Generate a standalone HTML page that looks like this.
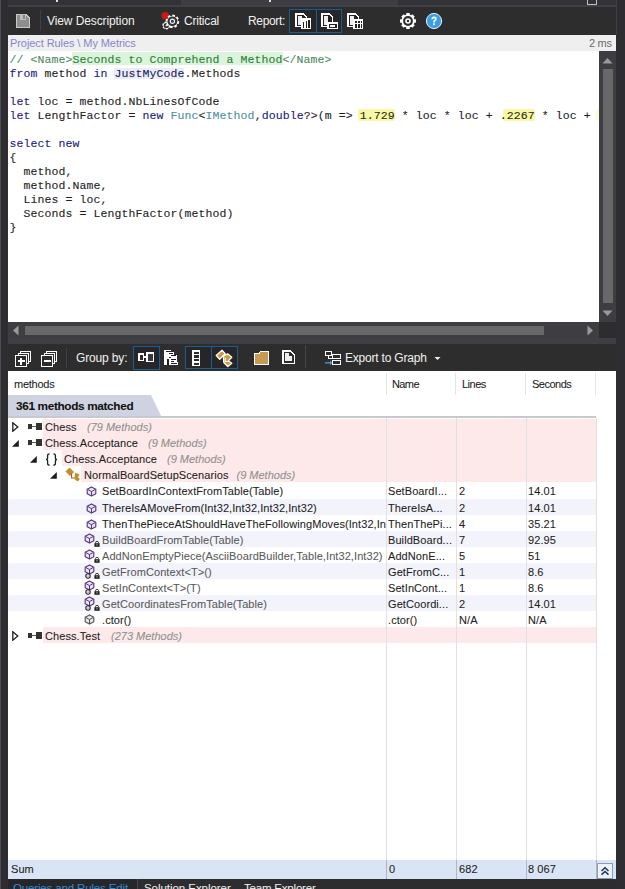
<!DOCTYPE html>
<html><head><meta charset="utf-8">
<style>
*{box-sizing:border-box}
html,body{margin:0;padding:0}
body{width:625px;height:889px;overflow:hidden;position:relative;background:#2d2d30;font-family:"Liberation Sans",sans-serif;}
.a{position:absolute}
.t{position:absolute;white-space:nowrap;line-height:1}
.code{position:absolute;left:9.5px;font-family:"Liberation Mono",monospace;font-size:11.5px;letter-spacing:0.1px;line-height:14px;-webkit-text-stroke:0.1px;white-space:pre;color:#1e1e1e}
.kw{color:#1a1a85}
.ty{color:#4f8ea6}
.cm{color:#4f8a5e}
.cmt{color:#2a8236}
.hl{color:#2a2a10}
.jm{color:#22225a}
.row{position:absolute;left:8px;width:588px;height:16px}
.cell{position:absolute;font-size:11px;line-height:16px;margin-top:1px;letter-spacing:0.08px;-webkit-text-stroke:0.08px currentColor;white-space:nowrap;color:#1e1e1e}
.it{font-style:italic;color:#888}
</style></head><body>
<!-- top band -->
<div class="a" style="left:0;top:0;width:625px;height:5px;background:#333337"></div>
<div class="a" style="left:181px;top:0;width:217px;height:5px;background:#3d3d43"></div>
<div class="a" style="left:0;top:5px;width:625px;height:2px;background:#404046"></div>
<div class="a" style="left:56px;top:0;width:1.5px;height:2px;background:#e0e0e0"></div>
<div class="a" style="left:269px;top:0;width:1.5px;height:2px;background:#e0e0e0"></div>
<div class="a" style="left:587px;top:-2px;width:10px;height:6.5px;border:1.5px solid #c0c0c0"></div>
<!-- left strip -->
<div class="a" style="left:0;top:0;width:8px;height:889px;background:#2d2d32"></div><div class="a" style="left:0;top:0;width:1px;height:889px;background:#4c4c52"></div>
<!-- right strip -->
<div class="a" style="left:616px;top:0;width:9px;height:889px;background:#2e2e32"></div><div class="a" style="left:616px;top:0;width:1px;height:35px;background:#404046"></div>
<!-- toolbar 1 -->
<div class="a" style="left:8px;top:7px;width:608px;height:28px;background:#2d2d2d"></div>


<!-- floppy -->
<svg class="a" style="left:15px;top:13px" width="16" height="16" viewBox="0 0 16 16" shape-rendering="crispEdges">
<path d="M1 1H11L15 5V15H1Z" fill="#c9c9c9"/>
<path d="M2 2H10.5L14 5.5V14H2Z" fill="#8e8e8e"/>
<rect x="5" y="1" width="6" height="6" fill="#bdbdbd"/>
<rect x="8" y="2" width="2" height="4" fill="#858585"/>
</svg>
<div class="a" style="left:40px;top:10px;width:1px;height:21px;background:#3f3f46"></div>
<div class="t" style="left:47px;top:15px;font-size:12px;letter-spacing:-0.1px;color:#f1f1f1">View Description</div>
<!-- critical gear -->
<svg class="a" style="left:158px;top:8px" width="26" height="24" viewBox="0 0 26 24">
<circle cx="7.3" cy="7.8" r="3.8" fill="#c81818"/>
<path d="M11.49 17.31 L12.40 17.55 L11.71 19.77 L10.83 19.46 L10.06 20.17 L10.31 21.08 L8.04 21.59 L7.86 20.67 L6.87 20.36 L6.21 21.03 L4.62 19.32 L5.34 18.71 L5.11 17.69 L4.20 17.45 L4.89 15.23 L5.77 15.54 L6.54 14.83 L6.29 13.92 L8.56 13.41 L8.74 14.33 L9.73 14.64 L10.39 13.97 L11.98 15.68 L11.26 16.29Z" fill="#fff"/>
<circle cx="8.3" cy="17.5" r="2.6" fill="#2d2d2d"/>
<circle cx="8.3" cy="17.5" r="0.9" fill="#ccc"/>
<path d="M19.79 13.05 L21.30 13.33 L20.77 15.96 L19.27 15.63 L18.39 16.94 L19.26 18.20 L17.02 19.68 L16.20 18.39 L14.65 18.69 L14.37 20.20 L11.74 19.67 L12.07 18.17 L10.76 17.29 L9.50 18.16 L8.02 15.92 L9.31 15.10 L9.01 13.55 L7.50 13.27 L8.03 10.64 L9.53 10.97 L10.41 9.66 L9.54 8.40 L11.78 6.92 L12.60 8.21 L14.15 7.91 L14.43 6.40 L17.06 6.93 L16.73 8.43 L18.04 9.31 L19.30 8.44 L20.78 10.68 L19.49 11.50Z" fill="#fff"/>
<circle cx="14.4" cy="13.3" r="4.9" fill="#333"/>
<circle cx="14.4" cy="13.3" r="2.1" fill="none" stroke="#eee" stroke-width="1.2"/>
<circle cx="14.4" cy="13.3" r="0.7" fill="#555"/>
</svg>
<div class="t" style="left:184px;top:15px;font-size:12px;letter-spacing:-0.2px;color:#f1f1f1">Critical</div>
<div class="t" style="left:248px;top:15px;font-size:12px;letter-spacing:-0.35px;color:#f1f1f1">Report:</div>
<!-- report buttons -->
<div class="a" style="left:289px;top:9px;width:28px;height:24px;border:1px solid #1b5d91;background:#262628"></div>
<div class="a" style="left:316px;top:9px;width:26px;height:24px;border:1px solid #1b5d91;background:#262628"></div>
<svg class="a" style="left:293px;top:11px" width="20" height="20" viewBox="0 0 20 20" shape-rendering="crispEdges">
<path d="M2 2H10L14 6V16H2Z" fill="#fff"/>
<path d="M3.5 3.5H9.5L12.5 6.5V14.5H3.5Z" fill="#222"/>
<rect x="5" y="5" width="4" height="9" fill="#eee"/>
<rect x="8" y="7" width="10" height="11" fill="#fff"/>
<rect x="9.5" y="11" width="1.6" height="5.5" fill="#222"/>
<rect x="12.5" y="9.5" width="1.6" height="7" fill="#222"/>
<rect x="15.3" y="9" width="1.6" height="7.5" fill="#222"/>
</svg>
<svg class="a" style="left:319px;top:11px" width="20" height="20" viewBox="0 0 20 20" shape-rendering="crispEdges">
<path d="M2 2H10L14 6V16H2Z" fill="#fff"/>
<path d="M3.5 3.5H9.5L12.5 6.5V14.5H3.5Z" fill="#222"/>
<rect x="5" y="5" width="4" height="9" fill="#eee"/>
<rect x="8" y="11" width="11" height="7" fill="#fff"/>
<rect x="9.5" y="12.5" width="8" height="4" fill="#222"/>
<rect x="11" y="13.5" width="5" height="2" fill="#fff"/>
</svg>
<svg class="a" style="left:345px;top:11px" width="20" height="20" viewBox="0 0 20 20" shape-rendering="crispEdges">
<path d="M2 2H10L14 6V16H2Z" fill="#fff"/>
<path d="M3.5 3.5H9.5L12.5 6.5V14.5H3.5Z" fill="#222"/>
<rect x="5" y="5" width="4" height="9" fill="#eee"/>
<rect x="8" y="8" width="10" height="10" fill="#fff"/>
<rect x="9.5" y="9.5" width="2" height="2" fill="#222"/><rect x="12.5" y="9.5" width="2" height="2" fill="#222"/><rect x="15.5" y="9.5" width="1.5" height="2" fill="#222"/>
<rect x="9.5" y="12.5" width="2" height="2" fill="#222"/><rect x="12.5" y="12.5" width="2" height="2" fill="#222"/><rect x="15.5" y="12.5" width="1.5" height="2" fill="#222"/>
<rect x="9.5" y="15.3" width="2" height="1.7" fill="#222"/><rect x="12.5" y="15.3" width="2" height="1.7" fill="#222"/><rect x="15.5" y="15.3" width="1.5" height="1.7" fill="#222"/>
</svg>
<!-- settings gear -->
<svg class="a" style="left:399px;top:12px" width="18" height="18" viewBox="0 0 18 18">
<path d="M15.36 7.24 L16.91 7.26 L16.91 10.74 L15.36 10.76 L14.74 12.25 L15.82 13.37 L13.37 15.82 L12.25 14.74 L10.76 15.36 L10.74 16.91 L7.26 16.91 L7.24 15.36 L5.75 14.74 L4.63 15.82 L2.18 13.37 L3.26 12.25 L2.64 10.76 L1.09 10.74 L1.09 7.26 L2.64 7.24 L3.26 5.75 L2.18 4.63 L4.63 2.18 L5.75 3.26 L7.24 2.64 L7.26 1.09 L10.74 1.09 L10.76 2.64 L12.25 3.26 L13.37 2.18 L15.82 4.63 L14.74 5.75Z" fill="#fff"/>
<circle cx="9" cy="9" r="4.9" fill="#2d2d2d"/>
<circle cx="9" cy="9" r="2.8" fill="#fff"/>
<circle cx="9" cy="9" r="1.2" fill="#2d2d2d"/>
</svg>
<!-- help -->
<svg class="a" style="left:425px;top:12px" width="18" height="18" viewBox="0 0 18 18">
<circle cx="9" cy="9" r="7.6" fill="#3a9ee2" stroke="#e8f4fc" stroke-width="1"/>
<path d="M6.4 7.2Q6.4 4.6 9 4.6Q11.7 4.6 11.7 7Q11.7 8.3 10.4 9Q9.8 9.4 9.8 10.4H8.2Q8.2 8.8 9.3 8.1Q10 7.7 10 7Q10 6.2 9 6.2Q8.1 6.2 8.1 7.2Z" fill="#fff"/><rect x="8.1" y="11.3" width="1.8" height="1.8" fill="#fff"/>
</svg>

<!-- project bar -->
<div class="a" style="left:8px;top:35px;width:608px;height:16px;background:#efeff0"></div><div class="a" style="left:8px;top:50.5px;width:608px;height:1px;background:#e2e2e4"></div>
<div class="t" style="left:10px;top:38px;font-size:11px;letter-spacing:-0.08px;color:#8686cc">Project Rules \ My Metrics</div>
<div class="t" style="left:589px;top:38px;font-size:11px;letter-spacing:-0.3px;color:#6a6a6a">2 ms</div>

<!-- code area -->
<div class="a" style="left:8px;top:51px;width:591px;height:271px;background:#fff"></div>
<div class="a" style="left:72px;top:51.5px;width:211px;height:13.5px;background:#dcf4dc"></div>
<div class="a" style="left:114px;top:68px;width:70px;height:11px;background:#ececf9"></div>
<div class="a" style="left:358px;top:108.5px;width:37px;height:12px;background:#f8f8a6;border-radius:2px"></div>
<div class="a" style="left:503px;top:108.5px;width:32px;height:12px;background:#f8f8a6;border-radius:2px"></div>
<div class="a" style="left:596px;top:109px;width:3px;height:11px;background:#fbfbd8"></div>
<div class="code" style="top:52.5px"><span class="cm">// &lt;Name&gt;</span><span class="cmt">Seconds to Comprehend a Method</span><span class="cm">&lt;/Name&gt;</span>
<span class="kw">from</span> method <span class="kw">in</span> <span class="jm">JustMyCode</span>.Methods

<span class="kw">let</span> loc = method.NbLinesOfCode
<span class="kw">let</span> LengthFactor = <span class="kw">new</span> <span class="ty">Func</span>&lt;<span class="ty">IMethod</span>,<span class="kw">double</span>?&gt;(m =&gt; <span class="hl">1.729</span> * loc * loc + .<span class="hl">2267</span> * loc + 

<span class="kw">select</span> <span class="kw">new</span>
{
  method,
  method.Name,
  Lines = loc,
  Seconds = LengthFactor(method)
}</div>
<!-- vscroll -->
<div class="a" style="left:599px;top:51px;width:17px;height:271px;background:#3e3e42"></div>
<svg class="a" style="left:602px;top:57px" width="11" height="7" viewBox="0 0 11 7"><path d="M0.5 6.5H10.5L5.5 1Z" fill="#9a9a9a"/></svg>
<div class="a" style="left:603px;top:69px;width:9.5px;height:234px;background:#686868"></div>
<svg class="a" style="left:602px;top:310px" width="11" height="7" viewBox="0 0 11 7"><path d="M0.5 0.5H10.5L5.5 6Z" fill="#9a9a9a"/></svg>
<!-- hscroll -->
<div class="a" style="left:8px;top:322px;width:591px;height:16px;background:#3e3e42"></div>
<svg class="a" style="left:12px;top:325px" width="7" height="11" viewBox="0 0 7 11"><path d="M6.5 0.5V10.5L1 5.5Z" fill="#9a9a9a"/></svg>
<div class="a" style="left:25px;top:326px;width:519px;height:9px;background:#686868"></div>
<svg class="a" style="left:587px;top:325px" width="7" height="11" viewBox="0 0 7 11"><path d="M0.5 0.5V10.5L6 5.5Z" fill="#9a9a9a"/></svg>
<div class="a" style="left:599px;top:322px;width:17px;height:16px;background:#2d2d30"></div>
<div class="a" style="left:8px;top:338px;width:608px;height:6px;background:#3f3f46"></div>
<!-- toolbar 2 -->
<div class="a" style="left:8px;top:344px;width:608px;height:27px;background:#2d2d2d"></div>


<!-- toolbar2 icons -->
<svg class="a" style="left:14px;top:350px" width="18" height="18" viewBox="0 0 18 18" shape-rendering="crispEdges">
<path d="M6 1H17V12H6Z" fill="#fff"/><path d="M7 2H16V11H7Z" fill="#2d2d2d"/>
<path d="M4 3H15V14H4Z" fill="#fff"/><path d="M5 4H14V13H5Z" fill="#2d2d2d"/>
<path d="M1 5H13V17H1Z" fill="#fff"/><path d="M2.3 6.3H11.7V15.7H2.3Z" fill="#2d2d2d"/>
<rect x="6" y="7.5" width="2" height="7" fill="#fff"/><rect x="3.5" y="10" width="7" height="2" fill="#fff"/>
</svg>
<svg class="a" style="left:40px;top:350px" width="18" height="18" viewBox="0 0 18 18" shape-rendering="crispEdges">
<path d="M6 1H17V12H6Z" fill="#fff"/><path d="M7 2H16V11H7Z" fill="#2d2d2d"/>
<path d="M4 3H15V14H4Z" fill="#fff"/><path d="M5 4H14V13H5Z" fill="#2d2d2d"/>
<path d="M1 5H13V17H1Z" fill="#fff"/><path d="M2.3 6.3H11.7V15.7H2.3Z" fill="#2d2d2d"/>
<rect x="3.5" y="10" width="7" height="2" fill="#fff"/>
</svg>
<div class="a" style="left:66px;top:348px;width:1px;height:20px;background:#3f3f46"></div>
<div class="t" style="left:76px;top:352px;font-size:12px;letter-spacing:-0.15px;color:#f1f1f1">Group by:</div>
<div class="a" style="left:133px;top:346px;width:27px;height:24px;border:1px solid #1b5d91;background:#262628"></div>
<svg class="a" style="left:137px;top:351px" width="18" height="12" viewBox="0 0 18 12" shape-rendering="crispEdges">
<rect x="1" y="2" width="6" height="8" fill="#fff"/><rect x="2.5" y="3.5" width="3" height="5" fill="#2d2d2d"/>
<rect x="7" y="5" width="3" height="2" fill="#fff"/>
<rect x="9" y="1" width="8" height="10" fill="#fff"/><rect x="10.5" y="2.5" width="5" height="7" fill="#3a3a3a"/>
</svg>
<svg class="a" style="left:160px;top:346px" width="24" height="24" viewBox="0 0 24 24" shape-rendering="crispEdges">
<path d="M4 4H11V6H14V9H16.5V16H18V19H4Z" fill="#fff"/>
<rect x="6" y="5" width="5" height="1" fill="#222"/>
<rect x="9" y="7" width="4" height="1" fill="#222"/>
<rect x="11" y="9" width="5" height="1" fill="#222"/>
<rect x="9" y="11" width="2" height="1" fill="#222"/>
<rect x="11" y="13" width="5" height="1" fill="#222"/>
<rect x="11" y="15" width="3" height="1" fill="#222"/>
<rect x="11" y="17" width="6" height="1" fill="#222"/>
<rect x="7" y="13" width="2" height="6" fill="#222"/>
</svg>
<div class="a" style="left:185px;top:346px;width:27px;height:23px;border:1px solid #1b5d91;background:#262628"></div>
<div class="a" style="left:211px;top:346px;width:27px;height:23px;border:1px solid #1b5d91;background:#262628"></div>
<svg class="a" style="left:191px;top:350px" width="10" height="16" viewBox="0 0 10 16" shape-rendering="crispEdges">
<rect x="1" y="0" width="8" height="16" fill="#fff"/>
<rect x="2.5" y="1.5" width="5" height="2.5" fill="#2d2d2d"/>
<rect x="2.5" y="5.2" width="5" height="2.5" fill="#2d2d2d"/>
<rect x="2.5" y="8.9" width="5" height="2.5" fill="#2d2d2d"/>
<rect x="2.5" y="12.5" width="5" height="2" fill="#2d2d2d"/>
</svg>
<svg class="a" style="left:212px;top:346px" width="24" height="24" viewBox="0 0 24 24">
<path d="M4.2 9.6L10 4.2L13.2 7.7L7.7 13.3Z" fill="#d39a3c" stroke="#fff" stroke-width="1.3" stroke-linejoin="round"/>
<path d="M11.3 10.3L15.7 7.8L19.8 11.3L16.3 14.7L19.8 17.3L15.8 20.5L11.8 16.5Z" fill="#d39a3c" stroke="#fff" stroke-width="1.3" stroke-linejoin="round"/>
<path d="M13.2 11.5V15.5H17" fill="none" stroke="#fff" stroke-width="1.1"/>
</svg>
<svg class="a" style="left:253px;top:350px" width="18" height="16" viewBox="0 0 18 16" shape-rendering="crispEdges">
<path d="M1 3H6L7 1H16V15H1Z" fill="#fff"/>
<path d="M2 4H6.5L7.5 2H15V14H2Z" fill="#c79a52"/>
</svg>
<svg class="a" style="left:281px;top:349px" width="15" height="16" viewBox="0 0 15 16" shape-rendering="crispEdges">
<path d="M1 1H9L14 6V15H1Z" fill="#fff"/>
<path d="M2.5 2.5H8.5L12.5 6.5V13.5H2.5Z" fill="#2d2d2d"/>
<path d="M4 4H8V7H11V12H4Z" fill="#eee"/>
</svg>
<div class="a" style="left:305px;top:345px;width:1px;height:23px;background:#45454c"></div>
<svg class="a" style="left:324px;top:350px" width="18" height="17" viewBox="0 0 18 17" shape-rendering="crispEdges">
<rect x="1" y="1" width="7" height="5" fill="#fff"/><rect x="2.2" y="2.2" width="4.6" height="2.6" fill="#2d2d2d"/>
<rect x="8" y="4" width="9" height="5" fill="#fff"/><rect x="9.2" y="5.2" width="6.6" height="2.6" fill="#2d2d2d"/>
<rect x="8" y="10" width="9" height="5" fill="#fff"/><rect x="9.2" y="11.2" width="6.6" height="2.6" fill="#2d2d2d"/>
<rect x="4" y="6" width="1.2" height="3" fill="#fff"/><rect x="4" y="8" width="4" height="1.2" fill="#fff"/>
<path d="M1 12.2H6V10.5L8.5 12.8L6 15V13.4H1Z" fill="#4aa3e0" shape-rendering="auto"/>
</svg>
<div class="t" style="left:345px;top:352px;font-size:12px;letter-spacing:-0.2px;color:#f1f1f1">Export to Graph</div>
<svg class="a" style="left:434px;top:356px" width="7" height="5" viewBox="0 0 7 5"><path d="M0.5 1H6.5L3.5 4Z" fill="#f1f1f1"/></svg>

<!-- grid -->
<div class="a" style="left:8px;top:371px;width:608px;height:489px;background:#fff"></div>
<!-- sum row -->
<div class="a" style="left:8px;top:860px;width:608px;height:19px;background:#d9e4f5"></div>
<div class="a" style="left:8px;top:879px;width:608px;height:10px;background:#2d2d30"></div>
<!-- grid content -->
<div class="cell" style="left:14px;top:371px;color:#1e1e1e;line-height:24px;letter-spacing:-0.25px">methods</div><div class="cell" style="left:392px;top:371px;color:#1e1e1e;line-height:24px;letter-spacing:-0.6px">Name</div><div class="cell" style="left:462px;top:371px;color:#1e1e1e;line-height:24px;letter-spacing:-0.5px">Lines</div><div class="cell" style="left:532px;top:371px;color:#1e1e1e;line-height:24px;letter-spacing:-0.5px">Seconds</div><div class="a" style="left:386px;top:373px;width:1px;height:22px;background:#e4e4e4"></div><div class="a" style="left:455px;top:373px;width:1px;height:22px;background:#e4e4e4"></div><div class="a" style="left:525px;top:373px;width:1px;height:22px;background:#e4e4e4"></div><div class="a" style="left:595px;top:373px;width:1px;height:22px;background:#e4e4e4"></div><svg class="a" style="left:8px;top:395px" width="160" height="22" viewBox="0 0 160 22"><path d="M0 0H143L153.6 22H0Z" fill="#cfd3e1"/></svg><div class="a" style="left:8px;top:416px;width:588px;height:2px;background:#c8c8d0"></div><div class="cell" style="left:16px;top:396px;font-weight:bold;font-size:11.8px;letter-spacing:-0.35px;line-height:18px;color:#111">361 methods matched</div><div class="a" style="left:43px;top:419.0px;width:553px;height:15.100000000000001px;background:#fde9e9"></div><div class="a" style="left:43px;top:434.1px;width:553px;height:16.1px;background:#fde9e9"></div><div class="a" style="left:62px;top:450.2px;width:534px;height:16.1px;background:#fde9e9"></div><div class="a" style="left:81px;top:466.3px;width:515px;height:16.1px;background:#fde9e9"></div><div class="a" style="left:8px;top:498.5px;width:588px;height:16.1px;background:#f3f3fb"></div><div class="a" style="left:8px;top:530.7px;width:588px;height:16.1px;background:#f3f3fb"></div><div class="a" style="left:8px;top:562.9px;width:588px;height:16.1px;background:#f3f3fb"></div><div class="a" style="left:8px;top:595.1px;width:588px;height:16.1px;background:#f3f3fb"></div><div class="a" style="left:43px;top:627.3px;width:553px;height:16.1px;background:#fde9e9"></div><div class="a" style="left:386px;top:418px;width:1px;height:442px;background:#e0e0e5"></div><div class="a" style="left:456px;top:418px;width:1px;height:442px;background:#e0e0e5"></div><div class="a" style="left:526px;top:418px;width:1px;height:442px;background:#e0e0e5"></div><div class="a" style="left:596px;top:418px;width:1px;height:442px;background:#e0e0e5"></div><svg class="a" style="left:11.5px;top:422.0px" width="7" height="10" viewBox="0 0 7 10"><path d="M0.8 0.8L5.8 5L0.8 9.2Z" fill="#fff" stroke="#1e1e1e" stroke-width="1.3" stroke-linejoin="miter"/></svg><svg class="a" style="left:28px;top:423.0px" width="15" height="8" viewBox="0 0 15 8" shape-rendering="crispEdges"><rect x="0" y="1" width="4" height="5" fill="#333"/><rect x="4" y="3" width="4" height="1" fill="#555"/><rect x="8" y="0" width="6" height="7" fill="#333"/></svg><div class="cell" style="left:45px;top:418.0px;color:#1e1e1e;">Chess</div><div class="cell" style="left:87px;top:418.0px;color:#8f8f8f;font-style:italic;letter-spacing:0px">(79 Methods)</div><svg class="a" style="left:11.5px;top:440.1px" width="7" height="7" viewBox="0 0 7 7"><path d="M0 6.8H6.8V0Z" fill="#1e1e1e"/></svg><svg class="a" style="left:28px;top:439.1px" width="15" height="8" viewBox="0 0 15 8" shape-rendering="crispEdges"><rect x="0" y="1" width="4" height="5" fill="#333"/><rect x="4" y="3" width="4" height="1" fill="#555"/><rect x="8" y="0" width="6" height="7" fill="#333"/></svg><div class="cell" style="left:45px;top:434.1px;color:#1e1e1e;">Chess.Acceptance</div><div class="cell" style="left:148px;top:434.1px;color:#8f8f8f;font-style:italic;letter-spacing:0px">(9 Methods)</div><svg class="a" style="left:30.2px;top:456.2px" width="7" height="7" viewBox="0 0 7 7"><path d="M0 6.8H6.8V0Z" fill="#1e1e1e"/></svg><svg class="a" style="left:45px;top:453.2px" width="13" height="13" viewBox="0 0 13 13"><path d="M4.6 0.8Q2.6 0.8 2.6 2.6V5Q2.6 6.5 1 6.5Q2.6 6.5 2.6 8V10.4Q2.6 12.2 4.6 12.2" fill="none" stroke="#1e1e1e" stroke-width="1.3"/><path d="M8.4 0.8Q10.4 0.8 10.4 2.6V5Q10.4 6.5 12 6.5Q10.4 6.5 10.4 8V10.4Q10.4 12.2 8.4 12.2" fill="none" stroke="#1e1e1e" stroke-width="1.3"/></svg><div class="cell" style="left:64px;top:450.2px;color:#1e1e1e;">Chess.Acceptance</div><div class="cell" style="left:167px;top:450.2px;color:#8f8f8f;font-style:italic;letter-spacing:0px">(9 Methods)</div><svg class="a" style="left:49.5px;top:472.3px" width="7" height="7" viewBox="0 0 7 7"><path d="M0 6.8H6.8V0Z" fill="#1e1e1e"/></svg><svg class="a" style="left:65px;top:467.3px" width="16" height="15" viewBox="0 0 16 15"><path d="M1 4.5L4.5 1L8.5 5L5 8.5Z" fill="#c98a2a" stroke="#c98a2a" stroke-width="1" stroke-linejoin="round"/><path d="M6.5 6.5V11H10" fill="none" stroke="#8a6a3a" stroke-width="1.1"/><path d="M10 5.5L14.5 7.5L13 10.5L15 12L12.5 14.5L9.5 12Z" fill="#c98a2a"/></svg><div class="cell" style="left:84px;top:466.3px;color:#1e1e1e;">NormalBoardSetupScenarios</div><div class="cell" style="left:236.5px;top:466.3px;color:#8f8f8f;font-style:italic;letter-spacing:0px">(9 Methods)</div><svg class="a" style="left:86px;top:486.4px" width="11" height="11" viewBox="0 0 11 11"><path d="M5.5 0.9L9.8 3.2V7.8L5.5 10.1L1.2 7.8V3.2Z" fill="#ece2f8" stroke="#553a7a" stroke-width="1.15" stroke-linejoin="round"/><path d="M2 3.6L5.5 5.6L9 3.6M5.5 5.6V9.8" fill="none" stroke="#553a7a" stroke-width="1"/></svg><div class="cell" style="left:102px;top:482.4px;width:284px;overflow:hidden;color:#1e1e1e">SetBoardInContextFromTable(Table)</div><div class="cell" style="left:388px;top:482.4px;color:#1e1e1e;">SetBoardI...</div><div class="cell" style="left:459px;top:482.4px;color:#1e1e1e;">2</div><div class="cell" style="left:528px;top:482.4px;color:#1e1e1e;">14.01</div><svg class="a" style="left:86px;top:502.5px" width="11" height="11" viewBox="0 0 11 11"><path d="M5.5 0.9L9.8 3.2V7.8L5.5 10.1L1.2 7.8V3.2Z" fill="#ece2f8" stroke="#553a7a" stroke-width="1.15" stroke-linejoin="round"/><path d="M2 3.6L5.5 5.6L9 3.6M5.5 5.6V9.8" fill="none" stroke="#553a7a" stroke-width="1"/></svg><div class="cell" style="left:102px;top:498.5px;width:284px;overflow:hidden;color:#1e1e1e">ThereIsAMoveFrom(Int32,Int32,Int32,Int32)</div><div class="cell" style="left:388px;top:498.5px;color:#1e1e1e;">ThereIsA...</div><div class="cell" style="left:459px;top:498.5px;color:#1e1e1e;">2</div><div class="cell" style="left:528px;top:498.5px;color:#1e1e1e;">14.01</div><svg class="a" style="left:86px;top:518.6px" width="11" height="11" viewBox="0 0 11 11"><path d="M5.5 0.9L9.8 3.2V7.8L5.5 10.1L1.2 7.8V3.2Z" fill="#ece2f8" stroke="#553a7a" stroke-width="1.15" stroke-linejoin="round"/><path d="M2 3.6L5.5 5.6L9 3.6M5.5 5.6V9.8" fill="none" stroke="#553a7a" stroke-width="1"/></svg><div class="cell" style="left:102px;top:514.6px;width:284px;overflow:hidden;color:#1e1e1e">ThenThePieceAtShouldHaveTheFollowingMoves(Int32,Int32,Table)</div><div class="cell" style="left:388px;top:514.6px;color:#1e1e1e;">ThenThePi...</div><div class="cell" style="left:459px;top:514.6px;color:#1e1e1e;">4</div><div class="cell" style="left:528px;top:514.6px;color:#1e1e1e;">35.21</div><svg class="a" style="left:84px;top:532.7px" width="11" height="11" viewBox="0 0 11 11"><path d="M5.5 0.9L9.8 3.2V7.8L5.5 10.1L1.2 7.8V3.2Z" fill="#ece2f8" stroke="#553a7a" stroke-width="1.15" stroke-linejoin="round"/><path d="M2 3.6L5.5 5.6L9 3.6M5.5 5.6V9.8" fill="none" stroke="#553a7a" stroke-width="1"/></svg><svg class="a" style="left:93.5px;top:540.7px" width="6" height="6" viewBox="0 0 6 6"><path d="M1.5 2.3V1.6Q1.5 0.4 3 0.4Q4.5 0.4 4.5 1.6V2.3" fill="none" stroke="#222" stroke-width="0.9"/><rect x="0.4" y="2.2" width="5.2" height="3.6" fill="#222"/><rect x="2.5" y="3.2" width="1" height="1.2" fill="#ddd"/></svg><div class="cell" style="left:102px;top:530.7px;width:284px;overflow:hidden;color:#5a5a5a">BuildBoardFromTable(Table)</div><div class="cell" style="left:388px;top:530.7px;color:#1e1e1e;">BuildBoard...</div><div class="cell" style="left:459px;top:530.7px;color:#1e1e1e;">7</div><div class="cell" style="left:528px;top:530.7px;color:#1e1e1e;">92.95</div><svg class="a" style="left:84px;top:548.8px" width="11" height="11" viewBox="0 0 11 11"><path d="M5.5 0.9L9.8 3.2V7.8L5.5 10.1L1.2 7.8V3.2Z" fill="#ece2f8" stroke="#553a7a" stroke-width="1.15" stroke-linejoin="round"/><path d="M2 3.6L5.5 5.6L9 3.6M5.5 5.6V9.8" fill="none" stroke="#553a7a" stroke-width="1"/></svg><svg class="a" style="left:93.5px;top:556.8px" width="6" height="6" viewBox="0 0 6 6"><path d="M1.5 2.3V1.6Q1.5 0.4 3 0.4Q4.5 0.4 4.5 1.6V2.3" fill="none" stroke="#222" stroke-width="0.9"/><rect x="0.4" y="2.2" width="5.2" height="3.6" fill="#222"/><rect x="2.5" y="3.2" width="1" height="1.2" fill="#ddd"/></svg><div class="cell" style="left:102px;top:546.8px;width:284px;overflow:hidden;color:#5a5a5a">AddNonEmptyPiece(AsciiBoardBuilder,Table,Int32,Int32)</div><div class="cell" style="left:388px;top:546.8px;color:#1e1e1e;">AddNonE...</div><div class="cell" style="left:459px;top:546.8px;color:#1e1e1e;">5</div><div class="cell" style="left:528px;top:546.8px;color:#1e1e1e;">51</div><svg class="a" style="left:84px;top:563.9px" width="11" height="11" viewBox="0 0 11 11"><path d="M5.5 0.9L9.8 3.2V7.8L5.5 10.1L1.2 7.8V3.2Z" fill="#ece2f8" stroke="#553a7a" stroke-width="1.15" stroke-linejoin="round"/><path d="M2 3.6L5.5 5.6L9 3.6M5.5 5.6V9.8" fill="none" stroke="#553a7a" stroke-width="1"/></svg><svg class="a" style="left:84.5px;top:572.9px" width="6" height="6" viewBox="0 0 6 6"><circle cx="3" cy="3" r="2.2" fill="#fff" stroke="#222" stroke-width="1.1"/><circle cx="3" cy="3" r="0.6" fill="#222"/></svg><svg class="a" style="left:93.5px;top:572.9px" width="6" height="6" viewBox="0 0 6 6"><path d="M1.5 2.3V1.6Q1.5 0.4 3 0.4Q4.5 0.4 4.5 1.6V2.3" fill="none" stroke="#222" stroke-width="0.9"/><rect x="0.4" y="2.2" width="5.2" height="3.6" fill="#222"/><rect x="2.5" y="3.2" width="1" height="1.2" fill="#ddd"/></svg><div class="cell" style="left:102px;top:562.9px;width:284px;overflow:hidden;color:#5a5a5a">GetFromContext&lt;T&gt;()</div><div class="cell" style="left:388px;top:562.9px;color:#1e1e1e;">GetFromC...</div><div class="cell" style="left:459px;top:562.9px;color:#1e1e1e;">1</div><div class="cell" style="left:528px;top:562.9px;color:#1e1e1e;">8.6</div><svg class="a" style="left:84px;top:580.0px" width="11" height="11" viewBox="0 0 11 11"><path d="M5.5 0.9L9.8 3.2V7.8L5.5 10.1L1.2 7.8V3.2Z" fill="#ece2f8" stroke="#553a7a" stroke-width="1.15" stroke-linejoin="round"/><path d="M2 3.6L5.5 5.6L9 3.6M5.5 5.6V9.8" fill="none" stroke="#553a7a" stroke-width="1"/></svg><svg class="a" style="left:84.5px;top:589.0px" width="6" height="6" viewBox="0 0 6 6"><circle cx="3" cy="3" r="2.2" fill="#fff" stroke="#222" stroke-width="1.1"/><circle cx="3" cy="3" r="0.6" fill="#222"/></svg><svg class="a" style="left:93.5px;top:589.0px" width="6" height="6" viewBox="0 0 6 6"><path d="M1.5 2.3V1.6Q1.5 0.4 3 0.4Q4.5 0.4 4.5 1.6V2.3" fill="none" stroke="#222" stroke-width="0.9"/><rect x="0.4" y="2.2" width="5.2" height="3.6" fill="#222"/><rect x="2.5" y="3.2" width="1" height="1.2" fill="#ddd"/></svg><div class="cell" style="left:102px;top:579.0px;width:284px;overflow:hidden;color:#5a5a5a">SetInContext&lt;T&gt;(T)</div><div class="cell" style="left:388px;top:579.0px;color:#1e1e1e;">SetInCont...</div><div class="cell" style="left:459px;top:579.0px;color:#1e1e1e;">1</div><div class="cell" style="left:528px;top:579.0px;color:#1e1e1e;">8.6</div><svg class="a" style="left:84px;top:596.1px" width="11" height="11" viewBox="0 0 11 11"><path d="M5.5 0.9L9.8 3.2V7.8L5.5 10.1L1.2 7.8V3.2Z" fill="#ece2f8" stroke="#553a7a" stroke-width="1.15" stroke-linejoin="round"/><path d="M2 3.6L5.5 5.6L9 3.6M5.5 5.6V9.8" fill="none" stroke="#553a7a" stroke-width="1"/></svg><svg class="a" style="left:84.5px;top:605.1px" width="6" height="6" viewBox="0 0 6 6"><circle cx="3" cy="3" r="2.2" fill="#fff" stroke="#222" stroke-width="1.1"/><circle cx="3" cy="3" r="0.6" fill="#222"/></svg><svg class="a" style="left:93.5px;top:605.1px" width="6" height="6" viewBox="0 0 6 6"><path d="M1.5 2.3V1.6Q1.5 0.4 3 0.4Q4.5 0.4 4.5 1.6V2.3" fill="none" stroke="#222" stroke-width="0.9"/><rect x="0.4" y="2.2" width="5.2" height="3.6" fill="#222"/><rect x="2.5" y="3.2" width="1" height="1.2" fill="#ddd"/></svg><div class="cell" style="left:102px;top:595.1px;width:284px;overflow:hidden;color:#5a5a5a">GetCoordinatesFromTable(Table)</div><div class="cell" style="left:388px;top:595.1px;color:#1e1e1e;">GetCoordi...</div><div class="cell" style="left:459px;top:595.1px;color:#1e1e1e;">2</div><div class="cell" style="left:528px;top:595.1px;color:#1e1e1e;">14.01</div><svg class="a" style="left:84px;top:614.2px" width="11" height="11" viewBox="0 0 11 11"><path d="M5.5 0.9L9.8 3.2V7.8L5.5 10.1L1.2 7.8V3.2Z" fill="#e8e8e8" stroke="#555" stroke-width="1.15" stroke-linejoin="round"/><path d="M2 3.6L5.5 5.6L9 3.6M5.5 5.6V9.8" fill="none" stroke="#555" stroke-width="1"/></svg><div class="cell" style="left:102px;top:611.2px;width:284px;overflow:hidden;color:#1e1e1e">.ctor()</div><div class="cell" style="left:388px;top:611.2px;color:#1e1e1e;">.ctor()</div><div class="cell" style="left:459px;top:611.2px;color:#1e1e1e;">N/A</div><div class="cell" style="left:528px;top:611.2px;color:#1e1e1e;">N/A</div><svg class="a" style="left:11.5px;top:631.3px" width="7" height="10" viewBox="0 0 7 10"><path d="M0.8 0.8L5.8 5L0.8 9.2Z" fill="#fff" stroke="#1e1e1e" stroke-width="1.3" stroke-linejoin="miter"/></svg><svg class="a" style="left:28px;top:632.3px" width="15" height="8" viewBox="0 0 15 8" shape-rendering="crispEdges"><rect x="0" y="1" width="4" height="5" fill="#333"/><rect x="4" y="3" width="4" height="1" fill="#555"/><rect x="8" y="0" width="6" height="7" fill="#333"/></svg><div class="cell" style="left:45px;top:627.3px;color:#1e1e1e;">Chess.Test</div><div class="cell" style="left:111px;top:627.3px;color:#8f8f8f;font-style:italic;letter-spacing:0px">(273 Methods)</div><div class="cell" style="left:11px;top:859px;color:#1e1e1e;line-height:18px">Sum</div><div class="cell" style="left:389px;top:859px;color:#1e1e1e;line-height:18px">0</div><div class="cell" style="left:459px;top:859px;color:#1e1e1e;line-height:18px">682</div><div class="cell" style="left:528px;top:859px;color:#1e1e1e;line-height:18px">8 067</div><div class="a" style="left:386px;top:860px;width:1px;height:19px;background:#aab6cc"></div><div class="a" style="left:456px;top:860px;width:1px;height:19px;background:#aab6cc"></div><div class="a" style="left:526px;top:860px;width:1px;height:19px;background:#aab6cc"></div><div class="a" style="left:596px;top:860px;width:1px;height:19px;background:#aab6cc"></div><div class="a" style="left:597px;top:863px;width:16px;height:16px;border:1px solid #8d9bb5;background:#eef3fb"></div>
<svg class="a" style="left:599px;top:865px" width="12" height="12" viewBox="0 0 12 12"><path d="M2.5 6L6 2.8L9.5 6M2.5 9.6L6 6.4L9.5 9.6" fill="none" stroke="#1d3557" stroke-width="1.5"/></svg>
<!-- bottom tabs -->
<div class="a" style="left:8px;top:879px;width:129px;height:10px;background:#25272b"></div>
<div class="t" style="left:13px;top:882.5px;font-size:11.5px;letter-spacing:-0.15px;color:#3a8ad0">Queries and Rules Edit</div>
<div class="a" style="left:137px;top:879px;width:1px;height:10px;background:#45454b"></div><div class="t" style="left:144px;top:882.5px;font-size:11.5px;letter-spacing:-0.05px;color:#f1f1f1">Solution Explorer</div>
<div class="t" style="left:244px;top:882.5px;font-size:11.5px;letter-spacing:-0.2px;color:#f1f1f1">Team Explorer</div>

</body></html>
